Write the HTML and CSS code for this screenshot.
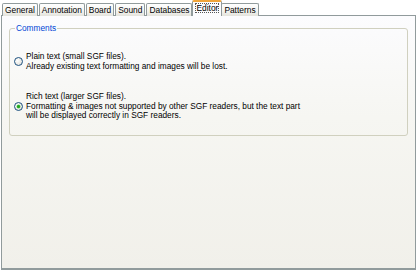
FILE: index.html
```html
<!DOCTYPE html>
<html>
<head>
<meta charset="utf-8">
<link rel="stylesheet" href="styles.css">
</head>
<body>
<div class="dialog">
  <div class="tabs">
    <div class="tab first">General</div>
    <div class="tab">Annotation</div>
    <div class="tab">Board</div>
    <div class="tab">Sound</div>
    <div class="tab">Databases</div>
    <div class="tab active"><span class="focus">Editor</span></div>
    <div class="tab">Patterns</div>
  </div>
  <div class="panel">
    <fieldset class="group">
      <legend class="legend">Comments</legend>
      <label class="option opt1">
        <span class="radio"></span>
        <span class="text">Plain text (small SGF files).<br>Already existing text formatting and images will be lost.</span>
      </label>
      <label class="option opt2">
        <span class="radio checked"></span>
        <span class="text">Rich text (larger SGF files).<br>Formatting &amp; images not supported by other SGF readers, but the text part<br>will be displayed correctly in SGF readers.</span>
      </label>
    </fieldset>
  </div>
</div>
</body>
</html>
```
FILE: styles.css
```css
html, body {
  margin: 0;
  padding: 0;
  background: #ffffff;
}
body {
  width: 417px;
  height: 271px;
  font-family: "Liberation Sans", Arial, sans-serif;
  font-size: 8.3px;
  color: #000;
}
.dialog {
  padding: 0 1px 0 1px;
  height: 271px;
  box-sizing: border-box;
  display: flex;
  flex-direction: column;
}
.tabs {
  display: flex;
  align-items: flex-end;
  padding-left: 1px;
  height: 16px;
  position: relative;
  z-index: 2;
  margin-bottom: -1px;
}
.tab {
  height: 13px;
  line-height: 12px;
  padding: 0 2px;
  border: 1px solid #919b9c;
  border-bottom: none;
  border-radius: 2px 2px 0 0;
  background: linear-gradient(#ffffff, #f3f3ef 60%, #e4e3dc);
  margin-right: 1px;
  box-sizing: border-box;
  white-space: nowrap;
  font-size: 8.4px;
}
.tab.active {
  height: 16px;
  line-height: 13px;
  background: #fcfcfe;
  border-top: 2px solid #f0a53a;
  margin-left: -1px;
  margin-right: -1px;
  padding: 0 2px;
}
.focus {
  outline: 1px dotted #555;
  outline-offset: -1px;
  padding: 0 1px;
}
.panel {
  flex: 1;
  border: 1px solid #919b9c;
  border-bottom-width: 2px;
  margin-bottom: 1px;
  background: linear-gradient(#fcfcfe, #f6f6f2 40%, #f1f0ea);
  padding: 8px 7px 0 7px;
}
.group {
  margin: 0;
  border: 1px solid #d0d0bf;
  border-radius: 3px;
  padding: 0 4px 0 4px;
  height: 112px;
  box-sizing: border-box;
  position: relative;
}
.legend {
  color: #0046d5;
  padding: 0 1px;
  margin-left: 1px;
  line-height: 9px;
}
.option {
  display: flex;
  align-items: center;
  gap: 3px;
}
.opt1 {
  margin-top: 19px;
}
.opt2 {
  margin-top: 21px;
}
.text {
  line-height: 9.5px;
}
.radio {
  width: 9px;
  height: 9px;
  border-radius: 50%;
  border: 1px solid #1c5180;
  box-sizing: border-box;
  background: radial-gradient(circle at 35% 35%, #ffffff, #dcdad3);
  display: flex;
  align-items: center;
  justify-content: center;
  flex: none;
}
.radio.checked::after {
  content: "";
  width: 3px;
  height: 3px;
  border-radius: 50%;
  background: #21a121;
  box-shadow: 0 0 0 0.5px #5fd35f;
}
```
